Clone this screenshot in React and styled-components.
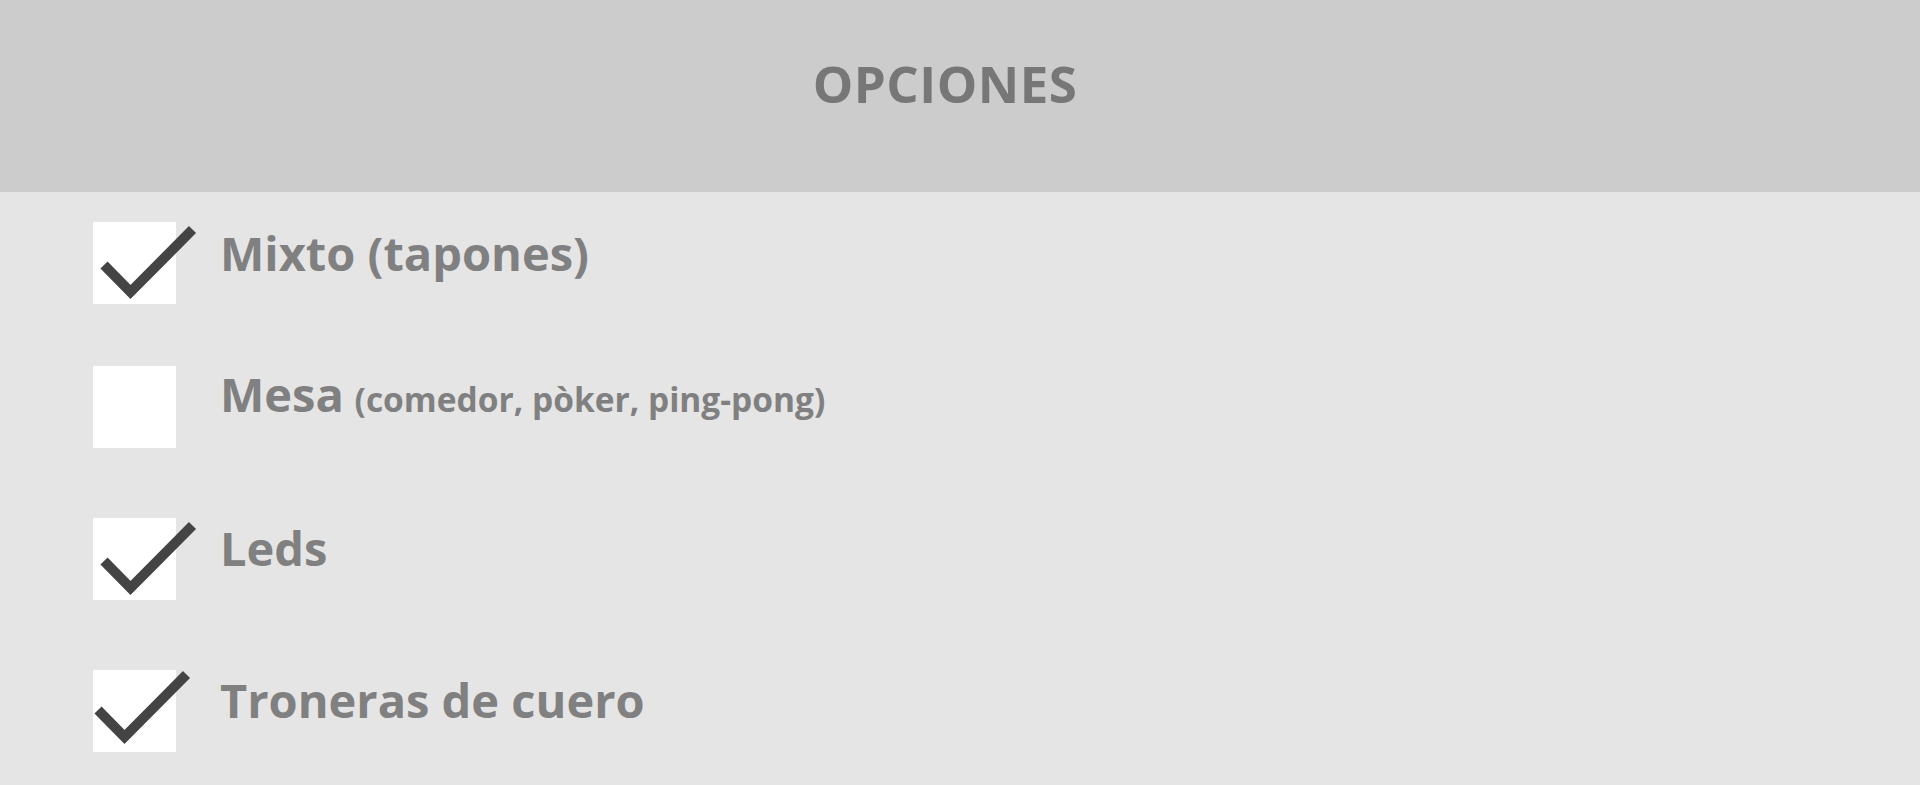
import React from "react";
import styled, { createGlobalStyle } from "styled-components";

const Global = createGlobalStyle`
  html, body { margin: 0; padding: 0; }
  body {
    background: #e5e5e5;
    font-family: "Open Sans", "Noto Sans", sans-serif;
    overflow: hidden;
  }
`;

const Page = styled.div`
  width: 1920px;
  height: 785px;
  background: #e5e5e5;
  display: flex;
  flex-direction: column;
`;

const Header = styled.header`
  height: 192px;
  background: #cccccc;
  display: flex;
  justify-content: center;
  align-items: flex-start;
  box-sizing: border-box;
  padding: 49px 30px 0 0;
`;

const Title = styled.h1`
  margin: 0;
  font-size: 51px;
  line-height: 1.36;
  font-weight: 700;
  color: #777777;
  letter-spacing: 0.5px;
`;

const List = styled.ul`
  list-style: none;
  margin: 0;
  padding: 0 0 0 93px;
  display: flex;
  flex-direction: column;
`;

const Row = styled.li`
  display: flex;
  align-items: flex-start;
  gap: 44px;
  margin-top: ${(p) => p.$top}px;
`;

const Box = styled.span`
  position: relative;
  flex: none;
  width: 83px;
  height: 82px;
  background: #ffffff;
`;

const Check = styled.svg`
  position: absolute;
  left: ${(p) => p.$dx}px;
  top: ${(p) => p.$dy}px;
  width: 110px;
  height: 90px;
  overflow: visible;
`;

const Label = styled.span`
  font-size: 47px;
  line-height: 1;
  font-weight: 700;
  color: #808080;
  margin-top: ${(p) => p.$offset}px;
  white-space: nowrap;
`;

const Small = styled.span`
  font-size: 33.5px;
  margin-left: 2px;
`;

const items = [
  { top: 30, offset: 8, checked: true, dx: 0, dy: 0, label: "Mixto (tapones)" },
  { top: 62, offset: 5, checked: false, label: "Mesa", small: "(comedor, pòker, ping-pong)" },
  { top: 70, offset: 7, checked: true, dx: 0, dy: 0, label: "Leds" },
  { top: 70, offset: 7, checked: true, dx: -6.5, dy: -3.5, label: "Troneras de cuero" },
];

function CheckMark({ dx, dy }) {
  return (
    <Check $dx={dx} $dy={dy} viewBox="0 0 110 90">
      <polyline
        points="11,43 37.5,70 99.5,7.5"
        fill="none"
        stroke="#444444"
        strokeWidth="10"
        strokeLinecap="butt"
        strokeLinejoin="miter"
      />
    </Check>
  );
}

export default function App() {
  return (
    <Page>
      <Global />
      <Header>
        <Title>OPCIONES</Title>
      </Header>
      <List>
        {items.map((it) => (
          <Row key={it.label} $top={it.top}>
            <Box>{it.checked && <CheckMark dx={it.dx} dy={it.dy} />}</Box>
            <Label $offset={it.offset}>
              {it.label}
              {it.small && <Small> {it.small}</Small>}
            </Label>
          </Row>
        ))}
      </List>
    </Page>
  );
}
